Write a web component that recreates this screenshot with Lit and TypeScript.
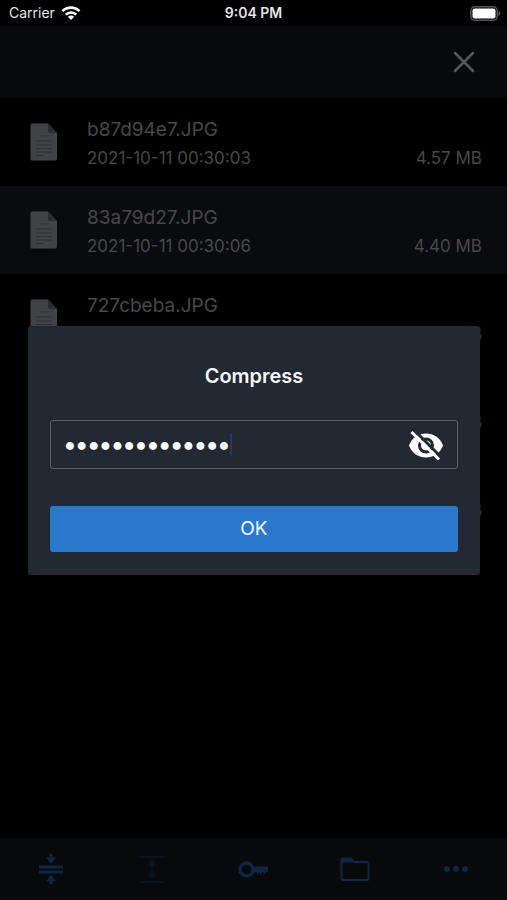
import { LitElement, html, css, svg, nothing } from "lit";
import { customElement } from "lit/decorators.js";
import { classMap } from "lit/directives/class-map.js";

interface FileEntry {
  name: string;
  date: string;
  size: string;
  selected?: boolean;
}

const FILES: FileEntry[] = [
  { name: "b87d94e7.JPG", date: "2021-10-11 00:30:03", size: "4.57 MB" },
  { name: "83a79d27.JPG", date: "2021-10-11 00:30:06", size: "4.40 MB", selected: true },
  { name: "727cbeba.JPG", date: "", size: "MB" },
  { name: "", date: "", size: "MB" },
  { name: "", date: "", size: "MB" },
];

const fileIcon = svg`
  <svg class="file-icon" viewBox="0 0 28 38" width="28" height="38" aria-hidden="true">
    <path d="M2 0.5H18L27 10V35.5a2 2 0 0 1-2 2H2a1.500 1.500 0 0 1-1.500-1.500V2A1.500 1.500 0 0 1 2 .5Z" fill="#414246" />
    <path d="M18 .5L27 10H19.500A1.500 1.500 0 0 1 18 8.500Z" fill="#2b2c2f" />
    <path d="M10 13H19M6 18H22M6 22H22M6 25.500H22M6 29H22M6 32.500H14" stroke="#2f3033" stroke-width="1" />
  </svg>`;

@customElement("status-bar")
class StatusBar extends LitElement {
  static styles = css`
    :host {
      display: grid;
      grid-template-columns: 1fr auto 1fr;
      align-items: center;
      height: 26px;
      padding: 0 6px;
      box-sizing: border-box;
      background: #000;
      color: #e4e4e4;
      font-size: 14px;
      line-height: 26px;
    }
    .carrier {
      display: flex;
      align-items: center;
      gap: 6px;
      padding-left: 3px;
    }
    .time {
      font-weight: 600;
    }
    .battery {
      justify-self: end;
    }
  `;

  render() {
    return html`
      <span class="carrier">
        Carrier
        <svg width="20" height="16" viewBox="0 0 20 16" aria-hidden="true">
          <g fill="none" stroke="#fff" stroke-width="2.600">
            <path d="M1.500 6.200A12 12 0 0 1 18.500 6.200" />
            <path d="M4.800 9.600A7.400 7.400 0 0 1 15.200 9.600" />
          </g>
          <path d="M6.900 11.800A4.400 4.400 0 0 1 13.100 11.800L10 15Z" fill="#fff" />
        </svg>
      </span>
      <span class="time">9:04 PM</span>
      <svg class="battery" width="31" height="15" viewBox="0 0 31 15" aria-hidden="true">
        <rect x=".8" y=".8" width="26.400" height="13.400" rx="4" fill="none" stroke="#555" stroke-width="1.500" />
        <rect x="2.500" y="2.500" width="23" height="10" rx="2" fill="#fff" />
        <path d="M28.500 5C31 5.800 31 9.200 28.500 10Z" fill="#555" />
      </svg>
    `;
  }
}

@customElement("file-list")
class FileList extends LitElement {
  static properties = { files: { attribute: false } };
  declare files: FileEntry[];

  static styles = css`
    :host {
      display: block;
    }
    ul {
      margin: 0;
      padding: 0;
      list-style: none;
    }
    .row {
      display: flex;
      align-items: center;
      gap: 29px;
      height: 88px;
      padding: 0 25px 0 30px;
      box-sizing: border-box;
    }
    .selected {
      background: #0a0b0f;
    }
    .file-icon {
      flex: none;
    }
    .text {
      flex: 1;
      padding-top: 4px;
    }
    .name {
      height: 28px;
      color: #484848;
      font-size: 19px;
      line-height: 28px;
    }
    .meta {
      display: flex;
      justify-content: space-between;
      height: 28px;
      color: #484848;
      font-size: 17px;
      line-height: 28px;
    }
  `;

  render() {
    return html`<ul>
      ${this.files.map(
        (f) => html`<li class=${classMap({ row: true, selected: !!f.selected })}>
          ${fileIcon}
          <div class="text">
            <div class="name">${f.name || nothing}</div>
            <div class="meta"><span>${f.date}</span><span>${f.size}</span></div>
          </div>
        </li>`
      )}
    </ul>`;
  }
}

@customElement("tool-bar")
class ToolBar extends LitElement {
  static styles = css`
    :host {
      display: block;
      background: #07090a;
    }
    nav {
      display: grid;
      grid-template-columns: repeat(5, 1fr);
      height: 62px;
    }
    button {
      display: grid;
      place-items: center;
      margin: 0;
      padding: 0;
      border: 0;
      background: none;
      color: #0d2743;
    }
    button:disabled {
      color: #0a1220;
    }
  `;

  render() {
    return html`<nav>
      <button aria-label="Compress">
        <svg width="32" height="32" viewBox="0 0 32 32" fill="currentColor">
          <path d="M4 12.500H28V15.500H4ZM4 17.500H28V20.500H4Z" />
          <path d="M14.500 1H17.500V4.500L21 4L16 11L11 4L14.500 4.500ZM14.500 31H17.500V28L21 28.500L16 21.500L11 28.500L14.500 28Z" />
        </svg>
      </button>
      <button aria-label="Extract" disabled>
        <svg width="32" height="32" viewBox="0 0 32 32" fill="currentColor">
          <path d="M4 3H28V5H4ZM4 28H28V30H4Z" />
          <path d="M16 6L21 12.500H17.500V16H14.500V12.500H11ZM16 27L21 20.500H17.500V17H14.500V20.500H11Z" />
        </svg>
      </button>
      <button aria-label="Password">
        <svg width="30" height="30" viewBox="0 0 30 30">
          <circle cx="8.500" cy="15.500" r="6.500" fill="none" stroke="currentColor" stroke-width="3.500" />
          <path d="M14 12.500H30V18H28L26.500 20L25 18H24L22.500 20.500L21 18L19.500 20L18 18H14Z" fill="currentColor" />
        </svg>
      </button>
      <button aria-label="Folder">
        <svg width="30" height="30" viewBox="0 0 30 30">
          <path d="M2.500 4.500H11L14 8H27a1.500 1.500 0 0 1 1.500 1.500V24.500a1.500 1.500 0 0 1-1.500 1.500H3A1.500 1.500 0 0 1 1.500 24.500V5.500A1 1 0 0 1 2.500 4.500Z" fill="none" stroke="currentColor" stroke-width="2" />
          <path d="M2 4.500H11L14 8.500H2Z" fill="currentColor" />
        </svg>
      </button>
      <button aria-label="More">
        <svg width="26" height="8" viewBox="0 0 26 8" fill="currentColor">
          <circle cx="4" cy="4" r="3" />
          <circle cx="13" cy="4" r="3" />
          <circle cx="22" cy="4" r="3" />
        </svg>
      </button>
    </nav>`;
  }
}

@customElement("password-dialog")
class PasswordDialog extends LitElement {
  static properties = { visible: { state: true } };
  declare visible: boolean;

  constructor() {
    super();
    this.visible = false;
  }

  static styles = css`
    :host {
      display: block;
    }
    .panel {
      box-sizing: border-box;
      padding: 34px 22px 23px;
      border-radius: 3px;
      background: #222933;
    }
    h2 {
      margin: 0 0 28px;
      color: #f4f8fa;
      font-size: 20px;
      font-weight: 600;
      line-height: 32px;
      text-align: center;
    }
    .field {
      display: flex;
      align-items: center;
      height: 49px;
      margin-bottom: 37px;
      padding: 0 13px;
      box-sizing: border-box;
      border: 1px solid #56616a;
      border-radius: 3px;
    }
    input {
      field-sizing: content;
      height: 32px;
      max-width: 80%;
      margin: 0;
      padding: 0;
      border: 0;
      outline: 0;
      background: none;
      color: #fff;
      font-family: Inter, sans-serif;
      font-size: 25px;
      font-weight: 700;
      line-height: 32px;
    }
    .caret {
      width: 2px;
      height: 22px;
      background: #213a66;
    }
    .toggle {
      display: grid;
      margin: 0 0 0 auto;
      padding: 0;
      border: 0;
      background: none;
    }
    .ok {
      display: block;
      width: 100%;
      height: 46px;
      margin: 0;
      padding: 0;
      border: 0;
      border-radius: 3px;
      background: #2a79cc;
      color: #f2f7fc;
      font-family: Inter, sans-serif;
      font-size: 19px;
      line-height: 46px;
    }
  `;

  render() {
    return html`<form
      class="panel"
      role="dialog"
      aria-labelledby="title"
      @submit=${(e: Event) => e.preventDefault()}
    >
      <h2 id="title">Compress</h2>
      <div class="field">
        <input
          type=${this.visible ? "text" : "password"}
          aria-labelledby="title"
          autocomplete="off"
          value="abcdefghijklmn"
        />
        <span class="caret"></span>
        <button
          class="toggle"
          type="button"
          aria-label="Show password"
          @click=${() => (this.visible = !this.visible)}
        >
          <svg width="36" height="34" viewBox="0 0 36 34">
            <path d="M1 18.500C4 10.500 10.500 6.500 18 6.500S32 10.500 35 18.500C32 26.500 25.500 30.500 18 30.500S4 26.500 1 18.500Z" fill="#fff" />
            <circle cx="18" cy="18.500" r="6.500" fill="none" stroke="#222933" stroke-width="3" />
            <path d="M6 3L34 31" stroke="#222933" stroke-width="3" />
            <path d="M3.500 5L31 32.500" stroke="#fff" stroke-width="3" />
          </svg>
        </button>
      </div>
      <button class="ok" type="submit">OK</button>
    </form>`;
  }
}

@customElement("app-root")
class AppRoot extends LitElement {
  static styles = css`
    :host {
      position: relative;
      display: flex;
      flex-direction: column;
      min-height: 100vh;
      background: #000;
      font-family: Inter, sans-serif;
    }
    header {
      display: flex;
      align-items: center;
      justify-content: flex-end;
      height: 72px;
      padding: 0 31px;
      box-sizing: border-box;
      background: #08090a;
    }
    .close {
      display: grid;
      margin: 0;
      padding: 0;
      border: 0;
      background: none;
    }
    main {
      flex: 1;
    }
    .overlay {
      position: absolute;
      inset: 0;
      display: grid;
      align-items: center;
      padding: 0 27px 0 28px;
    }
  `;

  render() {
    return html`
      <status-bar></status-bar>
      <header>
        <button class="close" aria-label="Close">
          <svg width="24" height="24" viewBox="0 0 24 24">
            <path d="M3 3L21 21M21 3L3 21" stroke="#555657" stroke-width="2.500" stroke-linecap="round" />
          </svg>
        </button>
      </header>
      <main><file-list .files=${FILES}></file-list></main>
      <tool-bar></tool-bar>
      <div class="overlay"><password-dialog></password-dialog></div>
    `;
  }
}
